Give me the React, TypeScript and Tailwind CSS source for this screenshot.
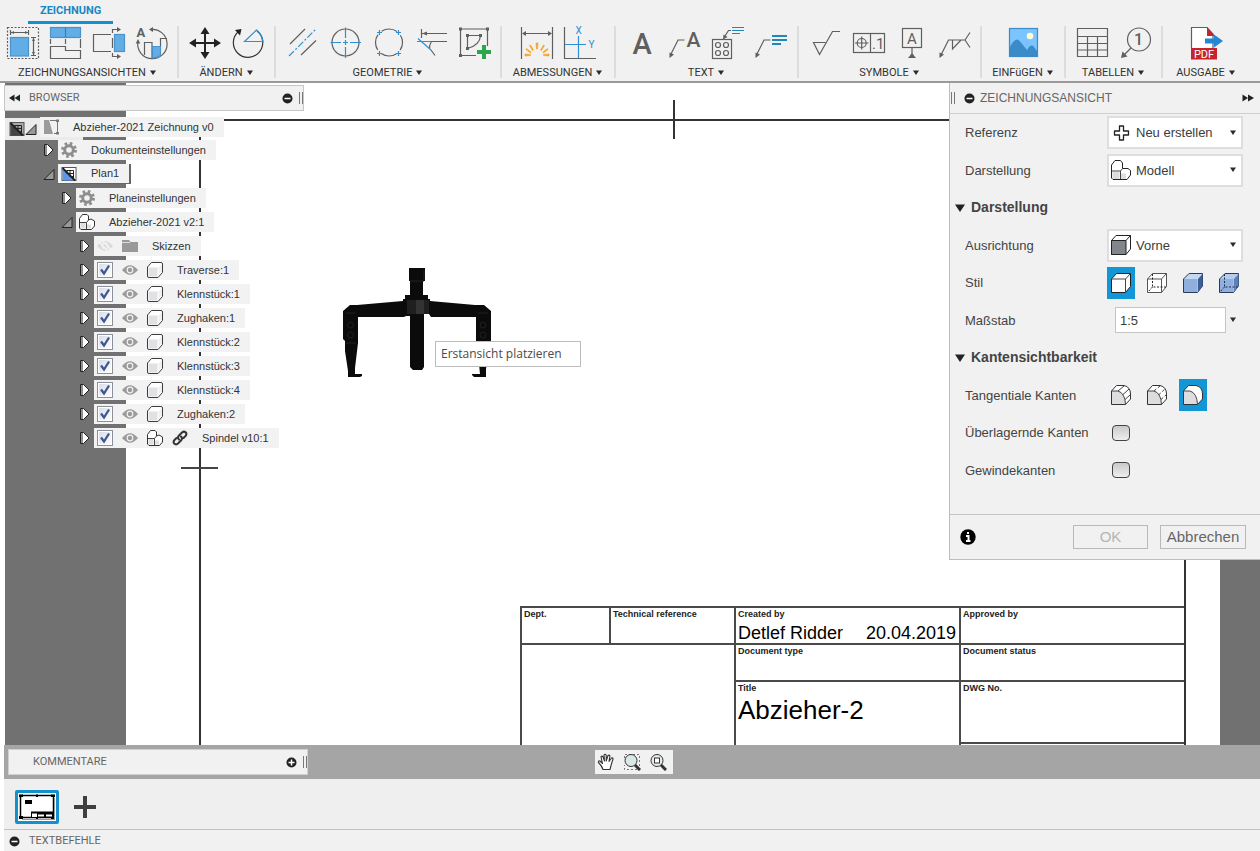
import React, { useState } from "react";

const INK = "#5f5f5f";
const BLUE = "#2f8fd0";
const SKY = "#63ade6";

/* ---------- shared pieces ---------- */

function Icon({ children }: { children: React.ReactNode }) {
  return (
    <svg viewBox="0 0 32 32" className="block h-8 w-8 overflow-visible" fill="none" stroke={INK} strokeWidth="1.2" aria-hidden="true">
      {children}
    </svg>
  );
}

function Caret() {
  return (
    <svg viewBox="0 0 8 6" className="h-[6px] w-2 shrink-0" aria-hidden="true">
      <path d="M1 0.5H7L4 5Z" fill="#2b2b2b" />
    </svg>
  );
}

function RoundSign({ plus = false }: { plus?: boolean }) {
  return (
    <svg viewBox="0 0 11 11" className="h-[11px] w-[11px]" aria-hidden="true">
      <circle cx="5.5" cy="5.5" r="5" fill="#222" />
      <path d={plus ? "M2.5 5.5H8.5M5.5 2.5V8.5" : "M2.5 5.5H8.5"} stroke="#fff" strokeWidth="1.5" />
    </svg>
  );
}

function Grip() {
  return <span className="h-3 w-1 border-x border-[#777]" />;
}

function DoubleArrow({ right = false }: { right?: boolean }) {
  return (
    <svg viewBox="0 0 12 8" className="h-2 w-3" aria-hidden="true">
      <path d={right ? "M0.5 0.5L6 4L0.5 7.5ZM6 0.5L12 4L6 7.5Z" : "M11 0.5L5.5 4L11 7.5ZM5.5 0.5L0 4L5.5 7.5Z"} fill="#222" />
    </svg>
  );
}

/* ---------- ribbon icons ---------- */

const BaseView = () => (
  <Icon>
    <rect x="0.5" y="0.5" width="31" height="31" strokeDasharray="2 1.5" />
    <rect x="3.5" y="10.5" width="18" height="18.5" fill={SKY} stroke="#4a92c9" />
    <path d="M3.5 3V8M21.5 3V8M4 5.5H21M24 10.5H29M24 28.5H29M26.5 11V28" />
    <path d="M4 5.5L7 4V7ZM21 5.5L18 4V7ZM26.5 11L25 14H28ZM26.5 28L25 25H28Z" fill={INK} stroke="none" />
  </Icon>
);
const ProjectedView = () => (
  <Icon>
    <rect x="0.5" y="0.5" width="30" height="10" fill={SKY} stroke="#4a92c9" />
    <path d="M15.5 0.5V10.5" stroke="#3a7fb5" />
    <path d="M0.5 12V17M15.5 12V17M30.5 12V21M0.5 31.5V19.5H15.5V23.5H30.5V31.5Z" />
  </Icon>
);
const SectionView = () => (
  <Icon>
    <path d="M18 7.5H0.5V24.5H18M19.5 6V2.5H25M19.5 26V29.5H25M19.5 11V21" />
    <path d="M24 0V5L28 2.5ZM24 27V32L28 29.5Z" fill={INK} stroke="none" />
    <rect x="21.5" y="7.5" width="10" height="17" fill={SKY} stroke="#4a92c9" />
  </Icon>
);
const DetailView = () => (
  <Icon>
    <path d="M14 2.5A14.7 14.7 0 1 1 2 14" />
    <path d="M13 2.5L17 0V5ZM2 12L-0.3 16.5H4.3Z" fill={INK} stroke="none" />
    <path d="M8.5 28V15.5H16V31M16 19.5H24.5V11.5H31" />
    <path d="M16.5 19.5H24.5V28.5Q21 31 16.5 31Z" fill={SKY} stroke="#4a92c9" />
    <text x="0.5" y="10" fontFamily="Roboto, sans-serif" fontWeight="700" fontSize="13" fill={INK} stroke="none">A</text>
  </Icon>
);
const Move = () => (
  <Icon>
    <path d="M16 4V28M4 16H28" stroke="#222" strokeWidth="2" />
    <path d="M16 0L20.500 7H11.500ZM16 32L20.500 25H11.500ZM0 16L7 11.500V20.500ZM32 16L25 11.500V20.500Z" fill="#222" stroke="none" />
  </Icon>
);
const Rotate = () => (
  <Icon>
    <path d="M6.500 4.500A14.700 14.700 0 1 0 25 4" stroke="#333" />
    <path d="M3 3L9.500 2L8 8.500Z" fill="#222" stroke="none" />
    <path d="M24.500 3L12.500 14.500H31Q30.500 8 24.500 3Z" stroke={BLUE} />
  </Icon>
);
const CenterLine = () => (
  <Icon>
    <path d="M4 17L19 2M15 28L30 13.500" />
    <path d="M3 29L30 2" stroke={BLUE} strokeDasharray="7 2 2 2" />
  </Icon>
);
const CenterMark = () => (
  <Icon>
    <circle cx="16.500" cy="15.500" r="13.500" />
    <path d="M16.500 0.500V11M16.500 13V18M16.500 20V31M1.500 15.500H12M14 15.500H19M21 15.500H32" stroke={BLUE} />
  </Icon>
);
const CenterPattern = () => (
  <Icon>
    <circle cx="17" cy="15.500" r="13.500" strokeDasharray="16.200 5" strokeDashoffset="-13.100" />
    <path d="M5 5.500H10M7.500 3V8M24 5.500H29M26.500 3V8M5 26.500H10M7.500 24V29M24 26.500H29M26.500 24V29" stroke={BLUE} />
  </Icon>
);
const EdgeExtension = () => (
  <Icon>
    <path d="M6.500 2V11M7 6.500H32M15 14.500H32M16 23L20 28.500M16.500 14.500Q14.500 17 14.500 22" />
    <path d="M7 6.500L12 4.500V8.500Z" fill={INK} stroke="none" />
    <path d="M2 14.500H16M3 11.500L16 23" stroke={BLUE} />
  </Icon>
);
const Sketch = () => (
  <Icon>
    <path d="M2.500 2H29.500V19M2.500 2V28.500H18M9.500 8.500H22.500M9.500 8.500V21.500M22.500 8.500Q22 18 9.500 21.500" />
    <path d="M1 0.500H4V3.500H1ZM28 0.500H31V3.500H28ZM1 27H4V30H1ZM8 7H11V10H8ZM21 7H24V10H21ZM8 20H11V23H8Z" fill={INK} stroke="none" />
    <path d="M26 18V32M19 25H33" stroke="#2da44e" strokeWidth="4" />
  </Icon>
);
const Dimension = () => (
  <Icon>
    <path d="M0.500 0V32M31.500 0V32M2 6.500H30" />
    <path d="M1 6.500L5 4V9ZM31 6.500L27 4V9Z" fill={INK} stroke="none" />
    <path d="M15 16H17L16.500 22H15.500ZM8.500 18.500L9.500 18L12.500 23L11.500 23.500ZM23.500 18.500L22.500 18L19.500 23L20.500 23.500ZM5 22.500L5.500 21.500L10 25L9.500 26ZM27 22.500L26.500 21.500L22 25L22.500 26ZM4 27L9.500 27.500V28.500L4 29ZM28 27L22.500 27.500V28.500L28 29Z" fill="#f5a31f" stroke="#f5a31f" strokeWidth="0.600" />
  </Icon>
);
const Ordinate = () => (
  <Icon>
    <path d="M0.500 0V31.500H32" />
    <path d="M14.500 9V31M1 17.500H22" stroke={BLUE} />
    <g fontFamily="Roboto, sans-serif" fontSize="10" fill={BLUE} stroke="none">
      <text x="11.500" y="7">X</text>
      <text x="24.500" y="21">Y</text>
    </g>
  </Icon>
);
const TextA = () => (
  <Icon>
    <text x="16" y="27" textAnchor="middle" fontFamily="Roboto, sans-serif" fontWeight="500" fontSize="29" fill={INK} stroke="none">A</text>
  </Icon>
);
const Leader = () => (
  <>
    <path d="M1.500 28L9 13H15.500" />
    <path d="M0.500 31L0.500 25.500L5 27.500Z" fill={INK} stroke="none" />
  </>
);
const LeaderText = () => (
  <Icon>
    <Leader />
    <text x="24.500" y="20" textAnchor="middle" fontFamily="Roboto, sans-serif" fontWeight="500" fontSize="21" fill={INK} stroke="none">A</text>
  </Icon>
);
const HoleNote = () => (
  <Icon>
    <rect x="0.500" y="12.500" width="19" height="19" />
    <circle cx="6" cy="18" r="2.500" /><circle cx="14" cy="18" r="2.500" />
    <circle cx="6" cy="26" r="2.500" /><circle cx="14" cy="26" r="2.500" />
    <path d="M13 9L16.500 3.500H19" />
    <path d="M11 12.500L11.500 7.500L15.500 10Z" fill={INK} stroke="none" />
    <path d="M20 0.500H32M20 3.500H32M20 6.500H28" stroke="#2187b8" />
  </Icon>
);
const LeaderNote = () => (
  <Icon>
    <Leader />
    <path d="M17 9H32M17 13H32M17 17H26" stroke="#2187b8" strokeWidth="2" />
  </Icon>
);
const Surface = () => (
  <Icon>
    <path d="M16.500 15.500H4.500L10.500 27.500L23.500 4.500H31" />
  </Icon>
);
const FeatureFrame = () => (
  <Icon>
    <rect x="1.500" y="6.500" width="31" height="19" />
    <path d="M18.500 6.500V25.500M3 16H16.500M9.700 9.500V22.500" />
    <circle cx="9.700" cy="16" r="4.500" />
    <text x="20" y="22" fontFamily="Roboto, sans-serif" fontSize="15" fill={INK} stroke="none">.1</text>
  </Icon>
);
const Datum = () => (
  <Icon>
    <rect x="7.500" y="1.500" width="19" height="19" />
    <text x="17" y="16.500" textAnchor="middle" fontFamily="Roboto, sans-serif" fontSize="15" fill={INK} stroke="none">A</text>
    <path d="M17 20.500V28" />
    <path d="M17 26L21 31H13Z" fill={INK} stroke="none" />
  </Icon>
);
const Weld = () => (
  <Icon>
    <path d="M3 28L10.500 13H27L32 5.500M27 13L32 20.500M14.500 13V22L23 13" />
    <path d="M1.500 31L1.500 25.500L6 27.500Z" fill={INK} stroke="none" />
  </Icon>
);
const Picture = () => (
  <Icon>
    <rect x="2.500" y="1.500" width="28" height="28" fill="#7cc4ff" stroke="#3a8bc8" />
    <path d="M3 20Q9 8 13.500 15L20 23Q24 16 27 20L30 24V29H3Z" fill="#3a8bc8" stroke="none" />
    <circle cx="23" cy="9" r="3.300" fill="#fdfdd8" stroke="none" />
  </Icon>
);
const TableIcon = () => (
  <Icon>
    <path d="M1.500 1.500H31.500V29.500H1.500ZM1.500 9.500H31.500M1.500 16.500H31.500M1.500 23H31.500M11.500 9.500V29.500M21.500 9.500V29.500" />
  </Icon>
);
const Balloon = () => (
  <Icon>
    <circle cx="20" cy="12.500" r="11.500" />
    <path d="M12 21L5 28" />
    <path d="M2 31L3.500 24.500L8.500 29.500Z" fill={INK} stroke="none" />
    <text x="19.500" y="18" textAnchor="middle" fontFamily="Roboto, sans-serif" fontWeight="500" fontSize="16" fill={INK} stroke="none">1</text>
  </Icon>
);
const PdfExport = () => (
  <Icon>
    <path d="M1.500 21V0.500H17L23 7V21" fill="#fff" />
    <path d="M17 0L24.500 9H17Z" fill="#c8232c" stroke="none" />
    <rect x="1" y="21" width="26" height="11.500" fill="#c8232c" stroke="none" />
    <text x="14" y="31" textAnchor="middle" fontFamily="Roboto, sans-serif" fontSize="11" fill="#fff" stroke="none">PDF</text>
    <path d="M15 11.500H24V7.500L33 14L24 20.500V16.500H15Z" fill="#2387d6" stroke="none" />
  </Icon>
);

const groups: { label: string; size: string; tools: [string, () => React.ReactElement][] }[] = [
  { label: "ZEICHNUNGSANSICHTEN", size: "pl-[7px] pr-[9px]", tools: [["Basisansicht", BaseView], ["Projizierte Ansicht", ProjectedView], ["Schnittansicht", SectionView], ["Detailansicht", DetailView]] },
  { label: "ÄNDERN", size: "px-[10px]", tools: [["Verschieben", Move], ["Drehen", Rotate]] },
  { label: "GEOMETRIE", size: "px-[10px]", tools: [["Mittellinie", CenterLine], ["Zentrumsmarkierung", CenterMark], ["Zentrumsmuster", CenterPattern], ["Kantenverlängerung", EdgeExtension], ["Skizze", Sketch]] },
  { label: "ABMESSUNGEN", size: "min-w-[114px]", tools: [["Bemaßung", Dimension], ["Koordinatenbemaßung", Ordinate]] },
  { label: "TEXT", size: "px-[10px]", tools: [["Text", TextA], ["Führungslinie", LeaderText], ["Bohrungsinfo", HoleNote], ["Hinweis", LeaderNote]] },
  { label: "SYMBOLE", size: "px-[10px]", tools: [["Oberfläche", Surface], ["Toleranzrahmen", FeatureFrame], ["Bezug", Datum], ["Schweißsymbol", Weld]] },
  { label: "EINFüGEN", size: "min-w-[84px]", tools: [["Bild", Picture]] },
  { label: "TABELLEN", size: "px-[10px]", tools: [["Tabelle", TableIcon], ["Positionsnummer", Balloon]] },
  { label: "AUSGABE", size: "min-w-[86px]", tools: [["PDF", PdfExport]] },
];

function Ribbon() {
  return (
    <header className="border-b-2 border-[#9a9a9a] bg-[#f1f1f1]">
      <nav className="flex pl-7">
        <a href="#zeichnung" className="border-b-[3px] border-[#1290cf] px-3 pt-px text-[11px] leading-5 font-bold text-[#1a87c2]">
          ZEICHNUNG
        </a>
      </nav>
      <div className="flex h-[57px] pt-[2px]">
        {groups.map((g, i) => (
          <section key={g.label} className={`flex h-[52px] shrink-0 flex-col items-center ${g.size} ${i < groups.length - 1 ? "border-r-2 border-[#dcdcdc]" : ""}`}>
            <div className="flex gap-[11px] pt-px">
              {g.tools.map(([name, Tool]) => (
                <button key={name} type="button" aria-label={name} className="block">
                  <Tool />
                </button>
              ))}
            </div>
            <button type="button" className="mt-[6px] flex items-center gap-[3px] text-[11px] leading-4 whitespace-nowrap text-[#333]">
              {g.label}
              <Caret />
            </button>
          </section>
        ))}
      </div>
    </header>
  );
}

/* ---------- browser tree ---------- */

function Small({ children }: { children: React.ReactNode }) {
  return (
    <svg viewBox="0 0 16 16" className="h-4 w-4 shrink-0" fill="none" aria-hidden="true">
      {children}
    </svg>
  );
}
const Doc = () => (
  <Small>
    <path d="M1 1H6L10 15H1Z" fill="#9b9b9b" />
    <path d="M7 1.500H14.500V14.500H11" stroke="#777" />
    <path d="M13 0.500H16V3H13ZM13 13H16V15.500H13Z" fill="#777" />
  </Small>
);
const Gear = () => (
  <Small>
    <circle cx="8" cy="8" r="6.500" stroke="#8e8e8e" strokeWidth="3" strokeDasharray="2.550 2.550" />
    <circle cx="8" cy="8" r="4.300" stroke="#8e8e8e" strokeWidth="3" />
  </Small>
);
const Sheet = ({ tint = "#5a98e8", paper = "#fff" }: { tint?: string; paper?: string }) => (
  <Small>
    <rect x="1" y="1.500" width="14" height="13" fill={paper} stroke="#555" />
    <path d="M1.500 2L14 14.500H1.500Z" fill={tint} />
    <path d="M5.500 4.500H12.500V12.500M5.500 7.500H12.500M8.500 10.500H12.500M9 4.500V10.500M6 4.500V7.500" stroke="#222" />
    <path d="M1.500 2L14 14.500" stroke="#222" strokeWidth="2" />
  </Small>
);
const Assembly = () => (
  <Small>
    <path d="M0.500 4.500L3.500 0.500H8L9.500 2V6L12 5L15.500 7V12L12.500 15.500H2L0.500 14Z" fill="#fff" stroke="#333" />
    <path d="M1.500 9H6.500V14.500H2.500L1.500 13.500ZM8 10.500H12V14.500H8Z" fill="#dedfe2" />
    <path d="M1 8.500H7.500V15M7.500 8.500L9.500 6" stroke="#444" />
  </Small>
);
const Cube = () => (
  <Small>
    <path d="M0.500 5L4.500 0.500H14Q15.500 0.500 15.500 2V10.500L11 15.500H2Q0.500 15.500 0.500 14Z" fill="#fff" stroke="#3c3c3c" />
    <path d="M1.500 5.500H10.500V14.500H2.500L1.500 13.500Z" fill="#e0e1e4" />
    <path d="M11.500 5.500L15 2V10L11.500 14Z" fill="#f0f0f3" />
  </Small>
);
const Eye = ({ off = false }: { off?: boolean }) => (
  <Small>
    <path d="M0 8Q8 -1.500 16 8Q8 17.500 0 8Z" fill={off ? "#dadada" : "#9a9a9a"} />
    <circle cx="8" cy="8" r="2.800" fill={off ? "#dadada" : "#9a9a9a"} stroke="#f2f2f2" strokeWidth="1.200" />
    {off && <path d="M1 3L13 15M4 1.500L16 13.500" stroke="#f2f2f2" strokeWidth="1.500" />}
  </Small>
);
const Folder = () => (
  <Small>
    <path d="M0 2H7L8.500 4H16V14H0Z" fill="#999" />
    <path d="M0 4.500H8" stroke="#ddd" />
  </Small>
);
const Chain = () => (
  <Small>
    <g stroke="#333" strokeWidth="2" strokeLinecap="round">
      <path d="M7 9.500Q5 7.500 7 5.500L10 2.500Q12 0.800 13.800 2.500Q15.200 4.200 13.500 6L11.500 8" />
      <path d="M9 6.500Q11 8.500 9 10.500L6 13.500Q4 15.200 2.200 13.500Q0.800 11.800 2.500 10L4.500 8" />
    </g>
  </Small>
);

function Tick({ name }: { name: string }) {
  return (
    <span className="grid h-4 w-4 shrink-0">
      <input type="checkbox" defaultChecked aria-label={name} className="peer col-start-1 row-start-1 appearance-none border border-[#8a9099] bg-linear-to-br from-[#d5dbe6] to-white outline-1 -outline-offset-2 outline-white" />
      <svg viewBox="0 0 16 16" className="pointer-events-none invisible col-start-1 row-start-1 h-4 w-4 peer-checked:visible" aria-hidden="true">
        <path d="M4 7.500L7 11.500L12 3.500" fill="none" stroke="#3c5590" strokeWidth="2.200" />
      </svg>
    </span>
  );
}

type Node = { name: string; level: number; open?: boolean; kind: "doc" | "gear" | "sheet" | "assembly" | "folder" | "part" | "linked"; active?: boolean };

const nodes: Node[] = [
  { name: "Abzieher-2021 Zeichnung v0", level: 0, open: true, kind: "doc" },
  { name: "Dokumenteinstellungen", level: 1, kind: "gear" },
  { name: "Plan1", level: 1, open: true, kind: "sheet", active: true },
  { name: "Planeinstellungen", level: 2, kind: "gear" },
  { name: "Abzieher-2021 v2:1", level: 2, open: true, kind: "assembly" },
  { name: "Skizzen", level: 3, kind: "folder" },
  { name: "Traverse:1", level: 3, kind: "part" },
  { name: "Klennstück:1", level: 3, kind: "part" },
  { name: "Zughaken:1", level: 3, kind: "part" },
  { name: "Klennstück:2", level: 3, kind: "part" },
  { name: "Klennstück:3", level: 3, kind: "part" },
  { name: "Klennstück:4", level: 3, kind: "part" },
  { name: "Zughaken:2", level: 3, kind: "part" },
  { name: "Spindel v10:1", level: 3, kind: "linked" },
];

const indents = ["pl-0", "pl-[38px]", "pl-[56px]", "pl-[74px]"];

function NodeIcons({ node }: { node: Node }) {
  switch (node.kind) {
    case "doc": return <Doc />;
    case "gear": return <Gear />;
    case "sheet": return <Sheet />;
    case "assembly": return <Assembly />;
    case "folder": return <><Eye off /><Folder /></>;
    case "part": return <><Tick name={node.name} /><Eye /><Cube /></>;
    case "linked": return <><Tick name={node.name} /><Eye /><Assembly /><Chain /></>;
  }
}

function Twisty({ open, name }: { open?: boolean; name: string }) {
  return (
    <button type="button" aria-expanded={!!open} aria-label={name} className="w-3 shrink-0">
      <svg viewBox="0 0 12 14" className="block h-[14px] w-3" aria-hidden="true">
        {open ? <path d="M11 2.500V12.500H1Z" fill="#999" stroke="#222" /> : <path d="M1.500 1.500H4.500L10 7L4.500 12.500H1.500ZM3 1.500V12.500" fill="#fff" stroke="#222" />}
      </svg>
    </button>
  );
}

function NodeLabel({ node }: { node: Node }) {
  return (
    <span className={`flex h-5 items-center gap-[9px] bg-[#f2f2f2] pr-[10px] pl-[3px] whitespace-nowrap ${node.active ? "border-r-2 border-b border-[#666] pr-[6px]" : ""}`}>
      <NodeIcons node={node} />
      <span className="pl-[5px]">{node.name}</span>
    </span>
  );
}

function Browser() {
  return (
    <aside className="z-10 col-start-1 row-start-1 ml-1 w-[300px] self-start pt-[2px]">
      <header className="flex h-[26px] items-center border border-[#c6c6c6] bg-[#f1f1f1] pl-1 text-[11px] text-[#666]">
        <button type="button" aria-label="Browser einklappen"><DoubleArrow /></button>
        <h2 className="flex-1 pl-2 font-[Roboto,sans-serif]">BROWSER</h2>
        <button type="button" aria-label="Browser minimieren" className="mr-1.5"><RoundSign /></button>
        <Grip />
      </header>
      <ul className="pt-[3px] pl-px text-[11px] text-[#333]">
        {nodes.map((n) =>
          n.level === 0 ? (
            <li key={n.name} className="grid h-6 grid-cols-[35px_auto] justify-start">
              <span className="col-start-1 row-start-1 mt-1 flex h-[22px] w-[78px] items-center bg-[#ebebeb] pl-1">
                <Sheet tint="#444" paper="#aaa" />
                <Twisty open name={n.name} />
              </span>
              <span className="z-10 col-start-2 row-start-1 self-center"><NodeLabel node={n} /></span>
            </li>
          ) : (
            <li key={n.name} className={`flex h-6 items-center ${indents[n.level]}`}>
              <span className="flex w-[15px] justify-start"><Twisty open={n.open} name={n.name} /></span>
              <NodeLabel node={n} />
            </li>
          ),
        )}
      </ul>
    </aside>
  );
}

/* ---------- drawing sheet ---------- */

function Puller() {
  return (
    <svg viewBox="0 0 150 112" className="absolute top-[185px] left-[217px] h-28 w-[150px]" aria-label="Abzieher">
      <g fill="#0b0b0b">
        <path d="M66 0H82V13H80V27H85V31H87V33L132 37H141L148 43V83H146L143 101V109H131L129 107V106H137L136 96L133 83V49H88L86 46H81V99L79 102H70L67 99V48H63L61 49H15V75L12 100V106H19V108L17 109H5V103L2 83V73L0 71V43L7 37H14L60 33V31H62V27H67V13H66Z" />
      </g>
      <path d="M66 32H86V46H64V32Z" fill="#1f1f1f" />
      <path d="M73 32H81V46H73Z" fill="#333" />
      <path d="M3 45H12M3 75H13M135 45H145M67 13H81M81 2V12" stroke="#222" fill="none" />
      <g fill="none" stroke="#202020">
        <circle cx="7.500" cy="57" r="3" />
        <circle cx="7.500" cy="67" r="3" />
        <circle cx="140" cy="57" r="3" />
        <circle cx="140" cy="67" r="3" />
      </g>
    </svg>
  );
}

function Cell({ label, className = "", children }: { label: string; className?: string; children?: React.ReactNode }) {
  return (
    <div className={`border-t-2 border-l-2 border-[#4a4a4a] pl-[2px] ${className}`}>
      <div className="pt-px text-[9px] leading-[11px] font-bold text-[#222]">{label}</div>
      {children}
    </div>
  );
}

function Drawing() {
  return (
    <div className="col-start-1 row-start-1 ml-[5px] flex bg-[#717171]">
      <div className="relative mr-10 ml-[121px] flex flex-1 bg-white pt-9 pr-[34px] pl-[73px]">
        <span className="absolute top-[17px] left-[547px] h-[39px] w-[2px] bg-[#333]" />
        <span className="absolute top-[384px] left-[55px] h-[2px] w-[37px] bg-[#444]" />
        <Puller />
        <div role="tooltip" className="absolute top-[258px] left-[309px] w-[146px] border border-[#bdbdbd] bg-white pl-[5px] font-['Open_Sans',sans-serif] text-[12px] leading-6 whitespace-nowrap text-[#4a4a4a]">
          Erstansicht platzieren
        </div>
        <div className="flex flex-1 flex-col items-end justify-end border-x-2 border-t-2 border-[#333]">
          <div className="grid grid-cols-[89px_125px_225px_225px] grid-rows-[37px_37px_62px_3px] text-black">
            <Cell label="Dept." />
            <Cell label="Technical reference" />
            <Cell label="Created by">
              <div className="flex justify-between pt-px pr-[3px] text-[18px] leading-6">
                <span>Detlef Ridder</span>
                <span>20.04.2019</span>
              </div>
            </Cell>
            <Cell label="Approved by" />
            <div className="col-span-2 row-span-3 border-t-2 border-l-2 border-[#4a4a4a]" />
            <Cell label="Document type" />
            <Cell label="Document status" />
            <Cell label="Title" className="row-span-2">
              <div className="text-[26px] leading-8">Abzieher-2</div>
            </Cell>
            <Cell label="DWG No." />
            <div className="border-t-2 border-l-2 border-[#4a4a4a]" />
          </div>
        </div>
      </div>
    </div>
  );
}

/* ---------- view panel ---------- */

function Glyph({ children }: { children: React.ReactNode }) {
  return (
    <svg viewBox="0 0 20 20" className="block h-5 w-5" fill="none" strokeLinejoin="round" aria-hidden="true">
      {children}
    </svg>
  );
}
const PlusOutline = () => (
  <Glyph><path d="M8.500 3H12.500V8H17.500V12H12.500V17H8.500V12H3.500V8H8.500Z" fill="#fff" stroke="#222" strokeWidth="1.300" /></Glyph>
);
const ModelGlyph = () => (
  <Glyph>
    <path d="M0.500 5L4 0.500H9.500L11.500 3V8.500H17L19.500 10.500V15L16 19.500H2L0.500 18Z" fill="#fff" stroke="#222" />
    <path d="M1.500 12H8.500V19H2.500L1.500 18ZM10 13.500H15V19H10Z" fill="#dcdde0" />
    <path d="M9.500 19V11L11.500 8.500M1 11H9.500" stroke="#444" />
  </Glyph>
);
const FrontGlyph = () => (
  <Glyph>
    <path d="M0.500 5.500L5 0.500H19.500V14L15 19.500H0.500Z" fill="#fff" stroke="#222" />
    <path d="M0.500 5.500H15V19.500H0.500Z" fill="#80868c" stroke="#222" />
    <path d="M15 5.500L19.500 0.500" stroke="#222" />
  </Glyph>
);
const Visible = () => (
  <Glyph>
    <path d="M0.500 6L5.500 0.500H19.500V13.500L14.500 19.500H0.500Z" fill="#fff" stroke="#222" />
    <path d="M0.500 6H14.500V19.500M14.500 6L19.500 0.500" stroke="#444" />
  </Glyph>
);
const Hidden = () => (
  <Glyph>
    <path d="M0.500 6L5.500 0.500H19.500V13.500L14.500 19.500H0.500ZM0.500 6H14.500V19.500M14.500 6L19.500 0.500" fill="#fff" stroke="#555" />
    <path d="M5.500 1V14H19M5.500 14L1 19" stroke="#222" strokeDasharray="2 1.500" />
  </Glyph>
);
const Shaded = () => (
  <Glyph>
    <path d="M0.500 6L6 0.500H19.500V13L14.500 19.500H0.500Z" fill="#c3d8f2" stroke="#2b3b55" />
    <path d="M1 6H14.500V19H1Z" fill="#8fb0de" />
    <path d="M15 6L19.500 1V13L15 19Z" fill="#3c5f96" />
  </Glyph>
);
const ShadedHidden = () => (
  <Glyph>
    <path d="M0.500 6L6 0.500H19.500V13L14.500 19.500H0.500Z" fill="#b5cdee" stroke="#2b3b55" />
    <path d="M1 6H14.500V19H1Z" fill="#8fb0de" />
    <path d="M15 6L19.500 1V13L15 19Z" fill="#5d80b8" />
    <path d="M5.500 1V14H19M5.500 14L1 19" stroke="#1d2c48" strokeDasharray="2 1.500" />
  </Glyph>
);
const Tangent = ({ mode }: { mode: 0 | 1 | 2 }) => (
  <Glyph>
    <path d="M0.500 6L5.500 0.500H13Q19.500 2 19.500 9V14L14.500 19.500H0.500Z" fill="#fff" stroke="#333" />
    <path d="M1 6H8Q14 9 14.500 19H1Z" fill="#dcdde1" />
    <path d="M0.500 6H7Q14 8 14.500 19.500" stroke="#444" />
    {mode < 2 && <path d="M7 6L13 1M11.500 10L18 4M14 14.500L19 10" stroke="#444" strokeDasharray={mode ? "3 2" : undefined} />}
  </Glyph>
);

function Select({ id, value, icon }: { id: string; value: string; icon: React.ReactNode }) {
  return (
    <div className="grid w-[136px] items-center">
      <select id={id} defaultValue={value} className="col-start-1 row-start-1 h-[33px] w-full appearance-none border-2 border-[#dedede] bg-white pl-[27px] text-[13px] text-[#3c3c3c]">
        <option>{value}</option>
      </select>
      <span className="pointer-events-none col-start-1 row-start-1 ml-1">{icon}</span>
      <span className="pointer-events-none col-start-1 row-start-1 mr-[6px] justify-self-end"><Caret /></span>
    </div>
  );
}

function Choices({ label, initial, items }: { label: string; initial: number; items: [string, React.ReactNode][] }) {
  const [active, setActive] = useState(initial);
  return (
    <div role="group" aria-label={label} className="flex gap-2">
      {items.map(([name, icon], i) => (
        <button key={name} type="button" aria-label={name} aria-pressed={active === i} onClick={() => setActive(i)} className={`flex h-8 w-7 items-center justify-center ${active === i ? "bg-[#1296d6]" : ""}`}>
          {icon}
        </button>
      ))}
    </div>
  );
}

function Row({ label, htmlFor, children }: { label: string; htmlFor?: string; children: React.ReactNode }) {
  return (
    <div className="grid grid-cols-[142px_1fr] items-center pl-[15px]">
      {htmlFor ? <label htmlFor={htmlFor}>{label}</label> : <span>{label}</span>}
      {children}
    </div>
  );
}

function Heading({ children }: { children: React.ReactNode }) {
  return (
    <h3 className="flex items-center pl-[5px]">
      <button type="button" aria-expanded="true" className="flex items-center gap-[6px] text-[14px] font-bold">
        <svg viewBox="0 0 10 8" className="h-2 w-[10px]" aria-hidden="true"><path d="M0 0.500H10L5 8Z" fill="#222" /></svg>
        {children}
      </button>
    </h3>
  );
}

function Box({ id }: { id: string }) {
  return (
    <span className="flex w-7 justify-center">
      <input id={id} type="checkbox" className="h-4 w-[18px] appearance-none rounded-[4px] border border-[#444] bg-linear-to-b from-[#c9c9c9] to-[#efefef] checked:bg-[#1296d6]" />
    </span>
  );
}

function ViewPanel() {
  return (
    <aside className="z-10 col-start-1 row-start-1 flex w-[311px] flex-col self-start justify-self-end border-b border-l border-[#bdbdbd] bg-[#f1f1f1] text-[13px] text-[#444]">
      <header className="flex h-[31px] items-center border-b border-[#cfcfcf] pr-1.5 pl-px text-[12px] text-[#666]">
        <Grip />
        <button type="button" aria-label="Dialog minimieren" className="ml-[9px]"><RoundSign /></button>
        <h2 className="flex-1 pl-[5px]">ZEICHNUNGSANSICHT</h2>
        <button type="button" aria-label="Dialog einklappen"><DoubleArrow right /></button>
      </header>
      <div className="grid h-[400px] grid-rows-10 pb-[25px]">
        <Row label="Referenz" htmlFor="ref"><Select id="ref" value="Neu erstellen" icon={<PlusOutline />} /></Row>
        <Row label="Darstellung" htmlFor="rep"><Select id="rep" value="Modell" icon={<ModelGlyph />} /></Row>
        <Heading>Darstellung</Heading>
        <Row label="Ausrichtung" htmlFor="ori"><Select id="ori" value="Vorne" icon={<FrontGlyph />} /></Row>
        <Row label="Stil">
          <Choices label="Stil" initial={0} items={[["Sichtbare Kanten", <Visible />], ["Verdeckte Kanten", <Hidden />], ["Schattiert", <Shaded />], ["Schattiert mit verdeckten Kanten", <ShadedHidden />]]} />
        </Row>
        <Row label="Maßstab" htmlFor="scale">
          <div className="flex items-center gap-[2px] pl-2">
            <input id="scale" defaultValue="1:5" className="h-[26px] w-[111px] border border-[#c4c4c4] bg-white pl-1 text-[13px] text-[#3c3c3c]" />
            <button type="button" aria-label="Maßstab wählen" className="pl-px"><Caret /></button>
          </div>
        </Row>
        <Heading>Kantensichtbarkeit</Heading>
        <Row label="Tangentiale Kanten">
          <Choices label="Tangentiale Kanten" initial={2} items={[["Volle Länge", <Tangent mode={0} />], ["Verkürzt", <Tangent mode={1} />], ["Aus", <Tangent mode={2} />]]} />
        </Row>
        <Row label="Überlagernde Kanten" htmlFor="over"><Box id="over" /></Row>
        <Row label="Gewindekanten" htmlFor="thread"><Box id="thread" /></Row>
      </div>
      <footer className="flex h-[45px] items-center gap-3 border-t border-[#c4c4c4] pr-[14px] pl-[10px] text-[15px]">
        <button type="button" aria-label="Info" className="mr-auto">
          <svg viewBox="0 0 16 16" className="block h-4 w-4"><circle cx="8" cy="8" r="7.700" fill="#000" /><path d="M8 3V5M6 7H8.500V12M6 12H10.500" stroke="#fff" strokeWidth="2" fill="none" /></svg>
        </button>
        <button type="button" disabled className="h-6 w-[75px] border border-[#b9b9b9] leading-5 text-[#b5b5b5]">OK</button>
        <button type="button" className="h-6 w-[86px] border border-[#b9b9b9] leading-5 text-[#666]">Abbrechen</button>
      </footer>
    </aside>
  );
}

/* ---------- bottom bars ---------- */

function CommentBar() {
  return (
    <div className="ml-1 grid h-[34px] grid-cols-[1fr_auto_1fr] items-center bg-[#a5a5a5] pl-1">
      <div className="flex h-[26px] w-[300px] items-center border border-[#d0d0d0] bg-[#f1f1f1] pl-6 text-[11px] text-[#666]">
        <h2 className="flex-1 pt-px">KOMMENTARE</h2>
        <button type="button" aria-label="Kommentar hinzufügen" className="mr-1.5"><RoundSign plus /></button>
        <Grip />
      </div>
      <div className="flex h-6 w-[78px] items-center gap-2 bg-[#f1f1f1] pl-[2px]">
        <button type="button" aria-label="Pan">
          <svg viewBox="0 0 18 18" className="block h-[18px] w-[18px]" fill="#fff" stroke="#333" strokeWidth="1.100" strokeLinejoin="round">
            <path d="M6 16.500Q5 13 1.500 9.500Q1 7.500 3 8L5.500 10.500L4 4Q4.500 2.500 5.800 3.500L7.500 8L7 2Q8 0.500 9.200 2V8L11 2.500Q12.500 1.500 12.900 3L12 8.500L14.500 5Q16 4.500 16 6L14 12.500L13 16.500Z" />
          </svg>
        </button>
        <button type="button" aria-label="Zoom">
          <svg viewBox="0 0 18 18" className="block h-[18px] w-[18px]" fill="none" stroke="#333">
            <path d="M1.500 5V1.500H16.500V16.500H1.500V12" strokeDasharray="2 2" stroke="#777" />
            <circle cx="8" cy="7.500" r="6" fill="#d7e8e6" />
            <path d="M12 12L17 17" strokeWidth="3" />
          </svg>
        </button>
        <button type="button" aria-label="Fenster zoomen">
          <svg viewBox="0 0 18 18" className="block h-[18px] w-[18px]" fill="none" stroke="#333">
            <circle cx="8" cy="7.500" r="6" fill="#e7ecec" />
            <rect x="5.500" y="5" width="5" height="5" fill="#fff" />
            <path d="M12 12L17 17" strokeWidth="3" />
          </svg>
        </button>
      </div>
    </div>
  );
}

function SheetTabs() {
  return (
    <div className="ml-1 flex h-[50px] items-center bg-[#efefef] pt-[6px] pl-[11px]">
      <button type="button" aria-label="Plan1" className="h-[34px] w-11 rounded-[2px] border-[3px] border-[#1490cc] bg-white">
        <svg viewBox="0 0 38 28" className="block h-7 w-[38px]" fill="none">
          <rect x="2.500" y="2.500" width="33" height="22" stroke="#000" strokeWidth="1.500" />
          <path d="M1 1.500H5V4H1ZM33 1.500H37V4H33ZM1 23H5V26H1ZM33 23H37V26H33ZM18 1.500H20V4H18ZM18 23H20V26H18ZM7 7H14V11H7ZM13 18.500H35V24H13Z" fill="#000" />
          <path d="M14 20.500H19V24H14ZM20 21.500H26V23.500H20ZM28 21.500H34V23.500H28Z" fill="#fff" />
          <path d="M36.500 5V26M4 26.500H37" stroke="#999" />
        </svg>
      </button>
      <button type="button" aria-label="Plan hinzufügen" className="ml-[15px]">
        <svg viewBox="0 0 22 22" className="block h-[22px] w-[22px]"><path d="M11 0V22M0 11H22" stroke="#3f3f3f" strokeWidth="4" /></svg>
      </button>
    </div>
  );
}

export default function App() {
  return (
    <div className="flex min-h-screen flex-col overflow-hidden bg-white font-['Liberation_Sans',Arial,sans-serif]">
      <div className="font-[Roboto,sans-serif]"><Ribbon /></div>
      <main className="grid flex-1 grid-cols-[minmax(0,1fr)]">
        <Drawing />
        <Browser />
        <ViewPanel />
      </main>
      <div className="font-[Roboto,sans-serif]">
        <CommentBar />
        <SheetTabs />
        <footer className="ml-1 flex h-[22px] items-center gap-[9px] border-t border-[#c2c2c2] bg-[#f1f1f1] pt-[2px] pl-[5px] text-[11px] text-[#666]">
          <button type="button" aria-label="Textbefehle minimieren"><RoundSign /></button>
          TEXTBEFEHLE
        </footer>
      </div>
    </div>
  );
}
